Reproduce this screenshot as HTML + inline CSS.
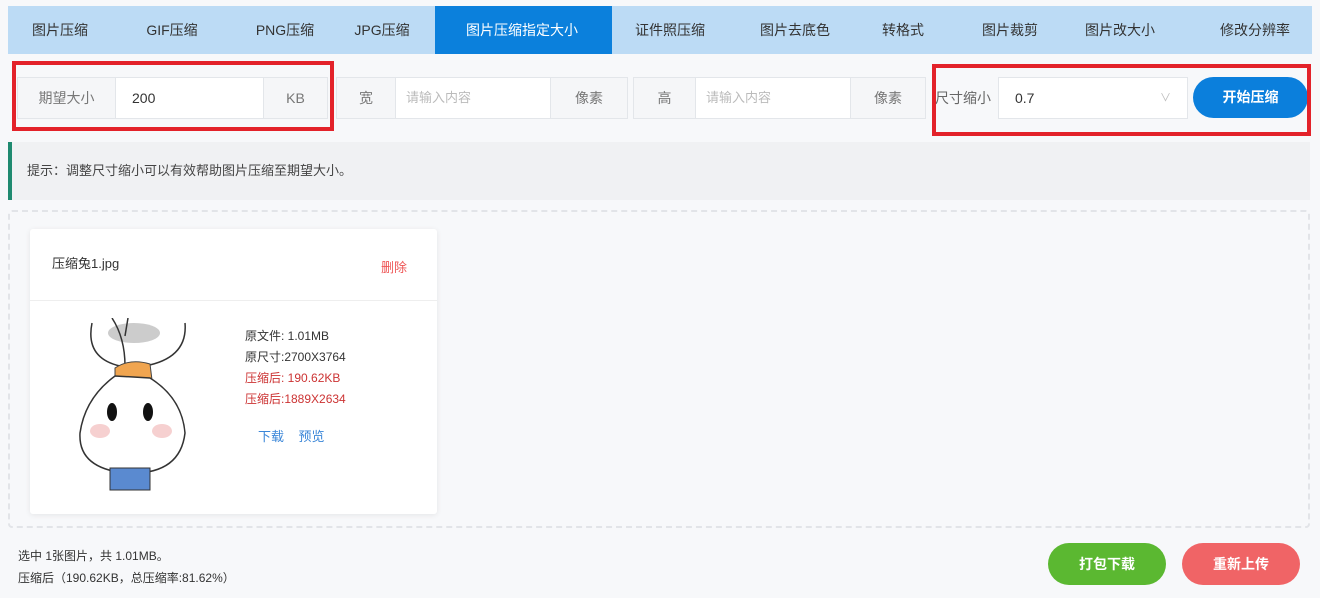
<!DOCTYPE html>
<html><head><meta charset="utf-8"><style>
*{margin:0;padding:0;box-sizing:border-box}
body{width:1320px;height:598px;background:#f7f8fa;font-family:"Liberation Sans","Noto Sans CJK SC",sans-serif;font-size:14px;color:#333;position:relative;overflow:hidden}
.a{position:absolute}
.tabs{left:8px;top:6px;width:1304px;height:48px;background:#bcdbf5}
.tab{position:absolute;top:6px;height:48px;line-height:48px;font-size:14px;color:#333;transform:translateX(-50%);white-space:nowrap}
.act{left:435px;top:6px;width:177px;height:48px;background:#0b80dc}
.box{background:#fff;border:1px solid #e3e6ea;height:42px;top:77px}
.lbl{background:#f5f6f8;border:1px solid #e3e6ea;height:42px;top:77px;line-height:40px;text-align:center;color:#777;font-size:14px}
.ph{color:#bbb;line-height:40px;padding-left:10px;font-size:13px}
.red{border:4px solid #e3222a}
</style></head><body>
<div class="a tabs"></div>
<div class="a act"></div>
<div class="tab" style="left:60px">图片压缩</div>
<div class="tab" style="left:172px">GIF压缩</div>
<div class="tab" style="left:285px">PNG压缩</div>
<div class="tab" style="left:382px">JPG压缩</div>
<div class="tab" style="left:522px;color:#fff">图片压缩指定大小</div>
<div class="tab" style="left:670px">证件照压缩</div>
<div class="tab" style="left:795px">图片去底色</div>
<div class="tab" style="left:903px">转格式</div>
<div class="tab" style="left:1010px">图片裁剪</div>
<div class="tab" style="left:1120px">图片改大小</div>
<div class="tab" style="left:1255px">修改分辨率</div>

<div class="a lbl" style="left:17px;width:99px">期望大小</div>
<div class="a box" style="left:115px;width:149px;line-height:40px;padding-left:16px;color:#333">200</div>
<div class="a lbl" style="left:263px;width:65px">KB</div>
<div class="a lbl" style="left:336px;width:60px">宽</div>
<div class="a box ph" style="left:395px;width:156px">请输入内容</div>
<div class="a lbl" style="left:550px;width:78px">像素</div>
<div class="a lbl" style="left:633px;width:63px">高</div>
<div class="a box ph" style="left:695px;width:156px">请输入内容</div>
<div class="a lbl" style="left:850px;width:76px">像素</div>
<div class="a" style="left:935px;top:77px;line-height:42px;color:#666">尺寸缩小</div>
<div class="a box" style="left:998px;width:190px;line-height:40px;padding-left:16px">0.7<span style="position:absolute;right:16px;color:#bbb;font-size:11px">∨</span></div>
<div class="a" style="left:1193px;top:77px;width:115px;height:41px;border-radius:21px;background:#0b7fdc;color:#fff;text-align:center;line-height:41px;font-weight:bold">开始压缩</div>
<div class="a red" style="left:12px;top:61px;width:322px;height:70px"></div>
<div class="a red" style="left:932px;top:64px;width:379px;height:72px"></div>

<div class="a" style="left:8px;top:142px;width:1302px;height:58px;background:#f0f1f3;border-left:4px solid #1f8a70"></div>
<div class="a" style="left:27px;top:160px;font-size:13px;color:#444">提示：调整尺寸缩小可以有效帮助图片压缩至期望大小。</div>

<div class="a" style="left:8px;top:210px;width:1302px;height:318px;border:2px dashed #e2e4e8;border-radius:4px"></div>
<div class="a" style="left:30px;top:229px;width:407px;height:285px;background:#fff;box-shadow:0 1px 6px rgba(0,0,0,.08);border-radius:3px"></div>
<div class="a" style="left:52px;top:253px;font-size:13px">压缩兔1.jpg</div>
<div class="a" style="left:381px;top:257px;font-size:13px;color:#e55">删除</div>
<div class="a" style="left:30px;top:300px;width:407px;height:1px;background:#eee"></div>
<svg class="a" style="left:70px;top:318px" width="130" height="175" viewBox="0 0 130 175">
<ellipse cx="64" cy="15" rx="26" ry="10" fill="#ccc"/>
<path d="M22 5 Q15 40 50 48 M115 5 Q118 40 75 48 M42 0 Q55 20 55 48 M58 0 L55 18" stroke="#333" stroke-width="1.5" fill="none"/>
<path d="M45 50 Q60 40 80 46 L82 62 Q62 66 45 62Z" fill="#f0a550" stroke="#444"/>
<path d="M45 58 Q15 80 10 115 Q8 150 55 155 Q110 158 115 115 Q112 80 80 60Z" fill="#fff" stroke="#333" stroke-width="1.5"/>
<ellipse cx="42" cy="94" rx="5" ry="9" fill="#111"/><ellipse cx="78" cy="94" rx="5" ry="9" fill="#111"/>
<ellipse cx="30" cy="113" rx="10" ry="7" fill="#f6d0d0"/><ellipse cx="92" cy="113" rx="10" ry="7" fill="#f6d0d0"/>
<path d="M40 150 L40 172 L80 172 L80 150Z" fill="#5a8ad0" stroke="#333"/>
</svg>
<div class="a" style="left:245px;top:326px;font-size:12px;line-height:21px;color:#333">原文件: 1.01MB<br>原尺寸:2700X3764<br><span style="color:#c33">压缩后: 190.62KB</span><br><span style="color:#c33">压缩后:1889X2634</span></div>
<div class="a" style="left:258px;top:426px;font-size:13px;color:#3a86d8">下载&nbsp;&nbsp;&nbsp;&nbsp;预览</div>

<div class="a" style="left:18px;top:545px;font-size:12px;line-height:22px;color:#333">选中 1张图片，共 1.01MB。<br>压缩后（190.62KB，总压缩率:81.62%）</div>
<div class="a" style="left:1048px;top:543px;width:118px;height:42px;border-radius:21px;background:#5bb831;color:#fff;text-align:center;line-height:42px;font-weight:bold">打包下载</div>
<div class="a" style="left:1182px;top:543px;width:118px;height:42px;border-radius:21px;background:#f06466;color:#fff;text-align:center;line-height:42px;font-weight:bold">重新上传</div>
</body></html>
